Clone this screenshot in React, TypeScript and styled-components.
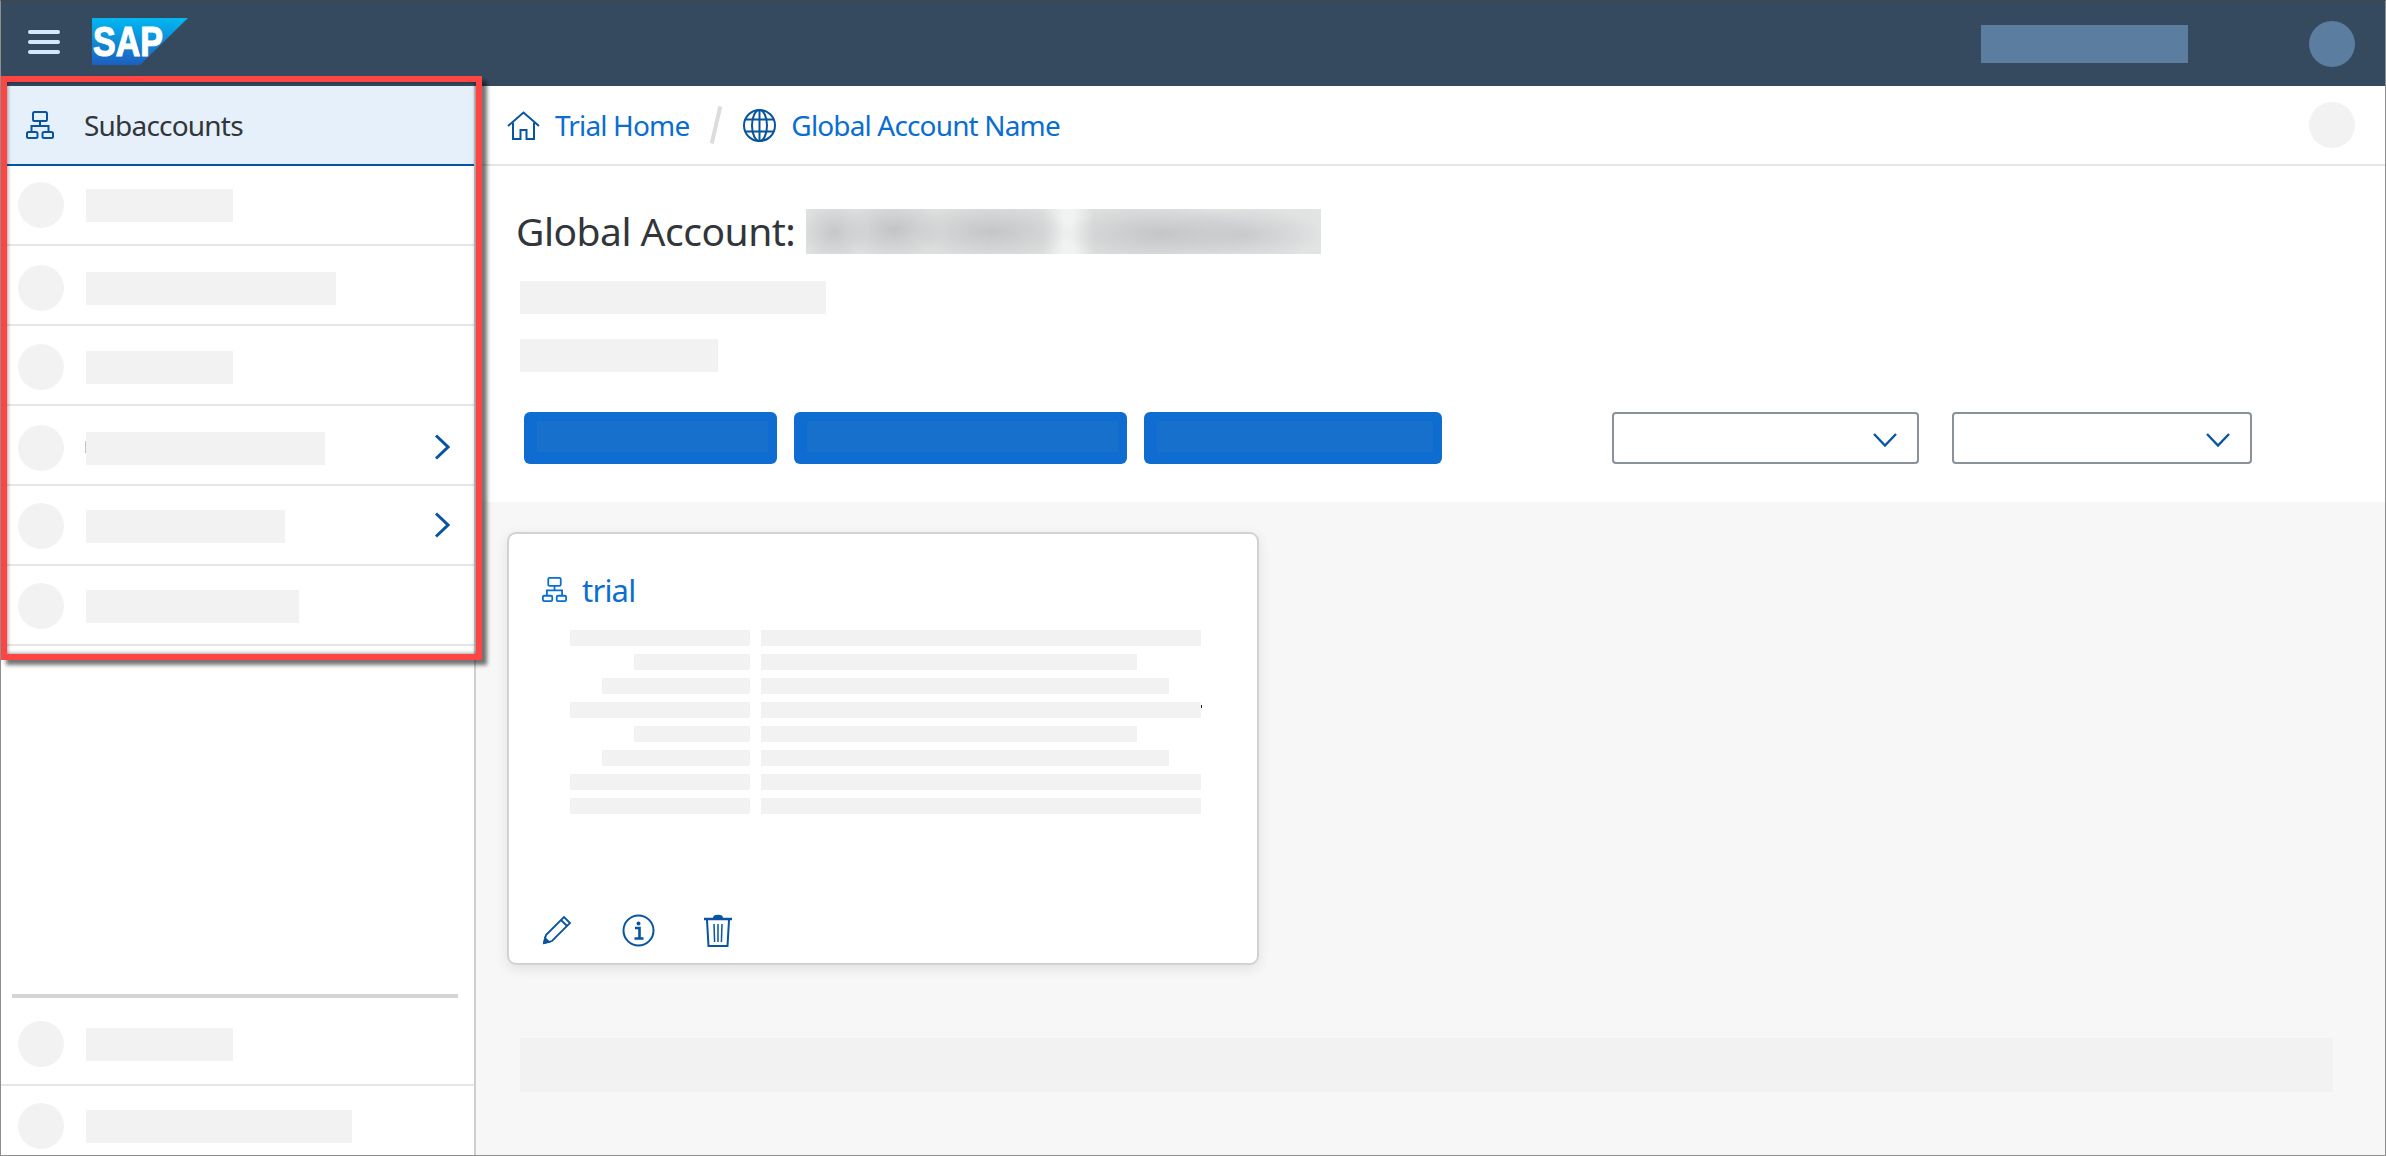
import * as React from 'react';
import styled, { createGlobalStyle } from 'styled-components';

const navy = '#0854a0';
const link = '#0a6ed1';
const placeholder = '#f2f2f2';

const GlobalStyle = createGlobalStyle`
  html, body {
    margin: 0;
    padding: 0;
    background: #fff;
  }
  * {
    box-sizing: border-box;
  }
`;

const Page = styled.div`
  border: 1px solid #8e8e8e;
  border-top-color: #454545;
  color: #32363a;
  display: flex;
  flex-direction: column;
  font-family: 'Noto Sans', 'Open Sans', sans-serif;
  height: 1156px;
  overflow: hidden;
  position: relative;
  width: 2386px;
`;

const ShellBar = styled.header`
  align-items: center;
  background: #354a5f;
  display: flex;
  flex: 0 0 85px;
  padding: 0 30px 0 27px;
`;

const MenuIcon = styled.svg`
  display: block;
  margin-bottom: 3px;
`;

const Logo = styled.svg`
  display: block;
  margin: 0 0 4px 32px;
`;

const ShellName = styled.div`
  background: #5b7da0;
  height: 38px;
  margin-left: auto;
  width: 207px;
`;

const ShellAvatar = styled.div`
  background: #5b7da0;
  border-radius: 50%;
  height: 46px;
  margin-left: 121px;
  width: 46px;
`;

const Body = styled.div`
  display: flex;
  flex: 1;
  min-height: 0;
`;

const Sidebar = styled.nav`
  border-right: 2px solid #cfcfcf;
  display: flex;
  flex: 0 0 475px;
  flex-direction: column;
  overflow: hidden;
`;

const NavRow = styled.div<{ $selected?: boolean; $shift?: number; $height?: number }>`
  align-items: center;
  background: ${({ $selected }) => ($selected ? '#e5f0fa' : '#fff')};
  border-bottom: 2px solid ${({ $selected }) => ($selected ? navy : '#e5e5e5')};
  display: flex;
  flex: 0 0 ${({ $height }) => $height ?? 80}px;
  gap: 22px;
  padding: ${({ $shift }) => ($shift ?? 0) * 2}px 24px 0 17px;
`;

const NavIcon = styled.div`
  display: flex;
  flex: 0 0 46px;
  justify-content: center;
  margin-left: -1px;
`;

const NavLabel = styled.span`
  font-size: 28px;
  letter-spacing: -0.8px;
  margin-left: -1px;
`;

const Dot = styled.div`
  background: ${placeholder};
  border-radius: 50%;
  flex: 0 0 46px;
  height: 46px;
`;

const Bar = styled.div<{ $width: number; $height?: number; $speck?: 'left' | 'right' }>`
  background: ${placeholder};
  flex: none;
  height: ${({ $height }) => $height ?? 33}px;
  position: relative;
  width: ${({ $width }) => $width}px;

  &::after {
    background: ${({ $speck }) => ($speck === 'right' ? '#222' : '#c4c4c4')};
    content: '';
    display: ${({ $speck }) => ($speck ? 'block' : 'none')};
    height: ${({ $speck }) => ($speck === 'right' ? 3 : 12)}px;
    position: absolute;
    top: ${({ $speck }) => ($speck === 'right' ? 3 : 9)}px;
    width: 1px;
    ${({ $speck }) => ($speck === 'right' ? 'right: -1px;' : 'left: -1px;')}
  }
`;

const RowArrow = styled.svg`
  flex: none;
  margin-left: auto;
  position: relative;
  top: -1px;
`;

const SideFooter = styled.div`
  display: flex;
  flex-direction: column;
  flex: none;
  margin-bottom: -11px;
  margin-top: auto;
`;

const SideRule = styled.div`
  background: #d5d5d5;
  height: 4px;
  margin: 0 16px 6px 11px;
`;

const Main = styled.main`
  display: flex;
  flex: 1;
  flex-direction: column;
  min-width: 0;
`;

const Breadcrumb = styled.div`
  align-items: center;
  border-bottom: 2px solid #e5e5e5;
  display: flex;
  flex: 0 0 80px;
  font-size: 28px;
  letter-spacing: -0.85px;
  padding: 0 30px 0 31px;
`;

const Crumb = styled.a`
  align-items: center;
  color: ${link};
  display: flex;
  gap: 15px;
`;

const CrumbSlash = styled.div`
  background: #dcdcdc;
  height: 38px;
  margin: 0 25px 0 25px;
  transform: rotate(13deg);
  width: 4px;
`;

const ActionDot = styled(Dot)`
  margin-left: auto;
`;

const Hero = styled.section`
  background: #fff;
  display: flex;
  flex: 0 0 336px;
  flex-direction: column;
  padding: 43px 133px 0 44px;
`;

const TitleRow = styled.div`
  align-items: center;
  display: flex;
  gap: 10px;
  height: 45px;
  margin-left: -4px;
`;

const Title = styled.h1`
  font-size: 39px;
  font-weight: 400;
  letter-spacing: -0.5px;
  margin: 0 0 2px;
`;

const BlurredName = styled.div`
  background:
    radial-gradient(ellipse 34px 30px at 5.5% 52%, #c6c7c9, transparent),
    radial-gradient(ellipse 50px 30px at 17% 46%, #c3c4c6, transparent),
    radial-gradient(ellipse 80px 28px at 36% 50%, #c4c5c7, transparent),
    radial-gradient(ellipse 100px 28px at 69% 55%, #c4c5c7, transparent),
    radial-gradient(ellipse 80px 26px at 85% 56%, #cacbcd, transparent),
    linear-gradient(
      90deg,
      #dfe0e0 0%,
      #dcdddd 46%,
      #f1f2f2 50%,
      #f1f2f2 52%,
      #dcdddd 56%,
      #e2e3e3 100%
    );
  height: 45px;
  margin-left: 1px;
  width: 515px;
`;

const SubBar = styled(Bar)<{ $first?: boolean }>`
  margin-top: ${({ $first }) => ($first ? 27 : 25)}px;
`;

const Actions = styled.div`
  align-items: center;
  display: flex;
  gap: 17px;
  margin: 40px 0 0 4px;
`;

const Primary = styled.button<{ $width: number }>`
  background: #0f6cd0;
  border: 0;
  border-radius: 6px;
  height: 52px;
  padding: 9px 9px 12px 13px;
  width: ${({ $width }) => $width}px;

  span {
    background: #1670cc;
    display: block;
    height: 100%;
  }
`;

const SelectBox = styled.div<{ $width: number }>`
  align-items: center;
  background: #fff;
  border: 2px solid #89919a;
  border-radius: 4px;
  display: flex;
  height: 52px;
  justify-content: flex-end;
  padding: 4px 20px 0 0;
  width: ${({ $width }) => $width}px;
`;

const FirstSelect = styled(SelectBox)`
  margin-left: auto;
  margin-right: 16px;
`;

const Content = styled.section`
  background: #f7f7f7;
  flex: 1;
  padding: 30px 31px 0;
`;

const Card = styled.article`
  background: #fff;
  border: 2px solid #d2d2d2;
  border-radius: 9px;
  box-shadow: 0 4px 14px rgba(0, 0, 0, 0.09);
  display: flex;
  flex-direction: column;
  height: 433px;
  padding: 43px 33px 17px;
  width: 752px;
`;

const CardTitle = styled.div`
  align-items: center;
  color: ${link};
  display: flex;
  font-size: 31px;
  gap: 15px;
  height: 25px;
  letter-spacing: -0.8px;
  line-height: 22px;
`;

const Facts = styled.div`
  display: flex;
  flex-direction: column;
  gap: 8px;
  margin: 28px 0 0 28px;
`;

const FactRow = styled.div`
  display: flex;
  gap: 11px;
`;

const FactLabel = styled.div`
  display: flex;
  flex: 0 0 180px;
  justify-content: flex-end;
`;

const CardFooter = styled.div`
  align-items: center;
  display: flex;
  height: 32px;
  margin-top: auto;
`;

const CardAction = styled.svg<{ $left: number }>`
  display: block;
  margin-left: ${({ $left }) => $left}px;
`;

const BottomBand = styled.div`
  background: ${placeholder};
  height: 54px;
  margin: 73px 0 0 13px;
  width: 1813px;
`;

const Highlight = styled.div`
  border: 6px solid #ff4444;
  box-shadow: 5px 5px 4px rgba(0, 0, 0, 0.55), inset 0 0 4px rgba(0, 0, 0, 0.55);
  height: 584px;
  left: 0;
  pointer-events: none;
  position: absolute;
  top: 75px;
  width: 481px;
`;

const Hierarchy = ({ size, color }: { size: number; color: string }) => (
  <svg width={size} height={size} viewBox="0 0 28 28" fill="none" stroke={color} strokeWidth="2">
    <rect x="7" y="1" width="14" height="9" rx="1.5" />
    <path d="M14 10v5M5.5 21v-6h17v6" />
    <rect x="1" y="21" width="10.5" height="6" rx="1.5" />
    <rect x="16.5" y="21" width="10.5" height="6" rx="1.5" />
  </svg>
);

const Chevron = () => (
  <RowArrow width="16" height="26" viewBox="0 0 16 26" fill="none" stroke={navy} strokeWidth="3">
    <path d="M2 1.5 14 13 2 24.5" />
  </RowArrow>
);

const ChevronDown = () => (
  <svg width="24" height="14" viewBox="0 0 24 14" fill="none" stroke={navy} strokeWidth="2.4">
    <path d="M1 1 12 12.5 23 1" />
  </svg>
);

const sideRows = [
  { width: 147, shift: 0 },
  { width: 250, shift: 3 },
  { width: 147, shift: 2 },
  { width: 239, shift: 3, arrow: true, speck: 'left' as const },
  { width: 199, shift: 1, arrow: true },
  { width: 213, shift: 1 },
];

const facts = [
  [180, 440],
  [116, 376],
  [148, 408],
  [180, 440],
  [116, 376],
  [148, 408],
  [180, 440],
  [180, 440],
];

export default function App() {
  return (
    <Page>
      <GlobalStyle />
      <ShellBar>
        <MenuIcon width="32" height="26" viewBox="0 0 32 26" fill="#d1e8ff">
          <rect x="0" y="1" width="32" height="4" rx="2" />
          <rect x="0" y="11" width="32" height="4" rx="2" />
          <rect x="0" y="21" width="32" height="4" rx="2" />
        </MenuIcon>
        <Logo width="96" height="47" viewBox="0 0 96 47">
          <defs>
            <linearGradient id="sapBlue" x1="0" y1="0" x2="0" y2="1">
              <stop offset="0" stopColor="#00b8f1" />
              <stop offset="1" stopColor="#1e5fbf" />
            </linearGradient>
          </defs>
          <polygon points="0,0 96,0 48,47 0,47" fill="url(#sapBlue)" />
          <text
            x="1"
            y="38"
            fill="#fff"
            stroke="#fff"
            strokeWidth="1.2"
            fontFamily="'Liberation Sans', sans-serif"
            fontSize="42"
            fontWeight="700"
            textLength="70"
            lengthAdjust="spacingAndGlyphs"
          >
            SAP
          </text>
        </Logo>
        <ShellName />
        <ShellAvatar />
      </ShellBar>
      <Body>
        <Sidebar>
          <NavRow $selected>
            <NavIcon>
              <Hierarchy size={28} color={navy} />
            </NavIcon>
            <NavLabel>Subaccounts</NavLabel>
          </NavRow>
          {sideRows.map((row, i) => (
            <NavRow key={i} $shift={row.shift}>
              <Dot />
              <Bar $width={row.width} $speck={row.speck} />
              {row.arrow && <Chevron />}
            </NavRow>
          ))}
          <SideFooter>
            <SideRule />
            <NavRow $height={82}>
              <Dot />
              <Bar $width={147} />
            </NavRow>
            <NavRow $shift={1}>
              <Dot />
              <Bar $width={266} />
            </NavRow>
          </SideFooter>
        </Sidebar>
        <Main>
          <Breadcrumb>
            <Crumb>
              <svg width="33" height="29" viewBox="0 0 33 29" fill="none" stroke={navy} strokeWidth="2">
                <path d="M1 15 16.5 1.5 32 15" />
                <path d="M6 11.5V28h7.5v-9h6v9H27V11.5" />
              </svg>
              Trial Home
            </Crumb>
            <CrumbSlash />
            <Crumb>
              <svg width="33" height="33" viewBox="0 0 33 33" fill="none" stroke={navy} strokeWidth="2">
                <circle cx="16.5" cy="16.5" r="15.5" />
                <ellipse cx="16.5" cy="16.5" rx="7.5" ry="15.5" />
                <path d="M16.5 1v31M2.5 10.5h28M2.5 22.5h28" />
              </svg>
              Global Account Name
            </Crumb>
            <ActionDot />
          </Breadcrumb>
          <Hero>
            <TitleRow>
              <Title>Global Account:</Title>
              <BlurredName />
            </TitleRow>
            <SubBar $first $width={306} />
            <SubBar $width={198} />
            <Actions>
              <Primary $width={253}>
                <span />
              </Primary>
              <Primary $width={333}>
                <span />
              </Primary>
              <Primary $width={298}>
                <span />
              </Primary>
              <FirstSelect $width={307}>
                <ChevronDown />
              </FirstSelect>
              <SelectBox $width={300}>
                <ChevronDown />
              </SelectBox>
            </Actions>
          </Hero>
          <Content>
            <Card>
              <CardTitle>
                <Hierarchy size={25} color={link} />
                trial
              </CardTitle>
              <Facts>
                {facts.map(([label, value], i) => (
                  <FactRow key={i}>
                    <FactLabel>
                      <Bar $width={label} $height={16} />
                    </FactLabel>
                    <Bar $width={value} $height={16} $speck={i === 3 ? 'right' : undefined} />
                  </FactRow>
                ))}
              </Facts>
              <CardFooter>
                <CardAction $left={0} width="30" height="30" viewBox="0 0 30 30" fill="none" stroke={navy} strokeWidth="1.8">
                  <path d="M2 28 4 20 22 2l6 6-18 18z" />
                  <path d="m19 5 6 6" />
                  <path d="M2 28l1-5 4 4z" fill={navy} />
                </CardAction>
                <CardAction $left={50} width="33" height="33" viewBox="0 0 33 33" fill="none" stroke={navy} strokeWidth="2">
                  <circle cx="16.5" cy="16.5" r="15" />
                  <circle cx="16.5" cy="9.5" r="2" fill={navy} stroke="none" />
                  <path d="M13 14h4.5v10M12.5 24.5h9" strokeWidth="2.6" />
                </CardAction>
                <CardAction $left={48} width="30" height="33" viewBox="0 0 30 33" fill="none" stroke={navy} strokeWidth="2">
                  <path d="M1 5h28" strokeWidth="2.5" />
                  <path d="M11 4c0-3 8-3 8 0" fill={navy} />
                  <path d="M4 6l1.5 26h19L26 6" />
                  <path d="M11 10l.6 18M15 10v18M19 10l-.6 18" strokeWidth="1.5" />
                </CardAction>
              </CardFooter>
            </Card>
            <BottomBand />
          </Content>
        </Main>
      </Body>
      <Highlight />
    </Page>
  );
}
